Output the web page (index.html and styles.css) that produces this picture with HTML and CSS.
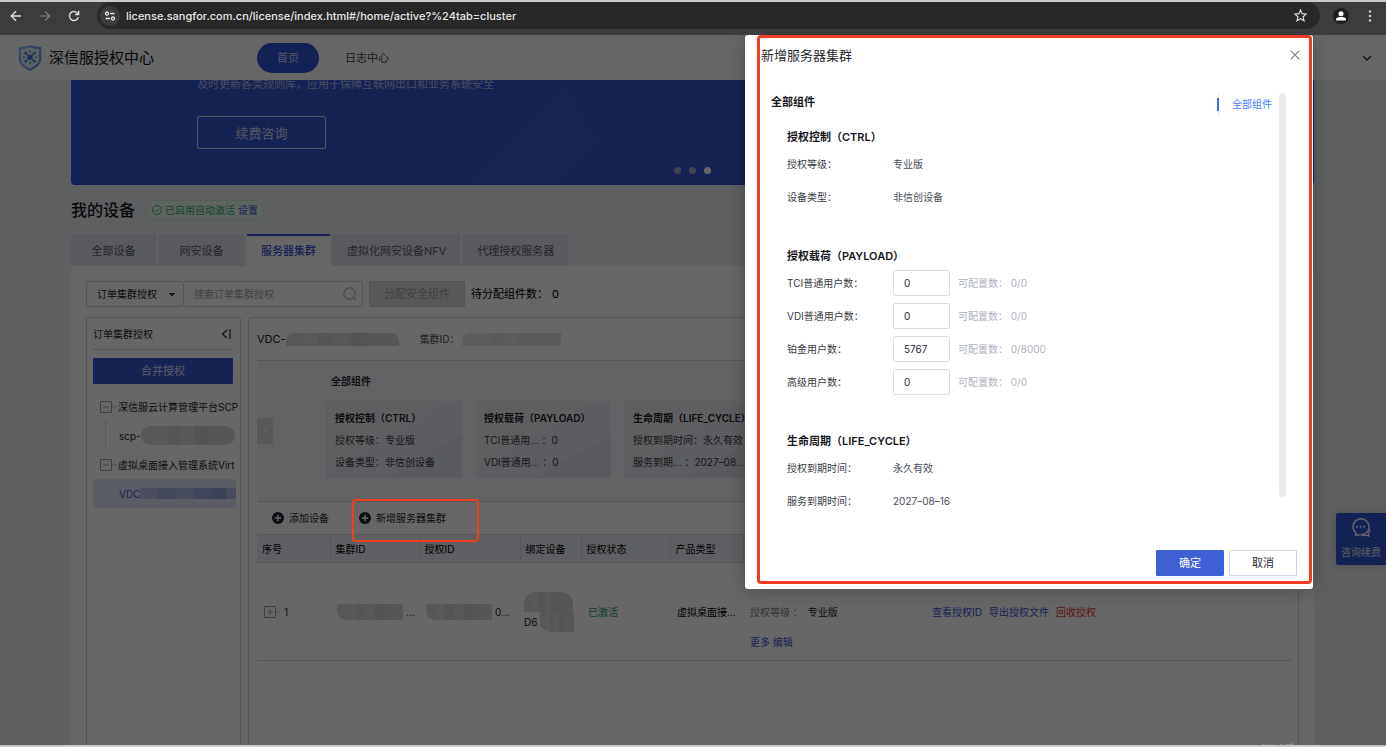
FILE: index.html
```html
<!DOCTYPE html>
<html lang="zh-CN">
<head>
<meta charset="utf-8">
<title>深信服授权中心</title>
<link rel="stylesheet" href="styles.css">
</head>
<body>
<div class="shell">
  <div class="browser">
    <button class="chrome-btn" aria-label="后退"><svg width="12" height="12" viewBox="0 0 12 12"><path d="M11 6H1.5M6 1.3 1.3 6 6 10.7" fill="none" stroke="#dcdcdc" stroke-width="1.4"/></svg></button>
    <button class="chrome-btn" aria-label="前进"><svg width="12" height="12" viewBox="0 0 12 12"><path d="M1 6h9.500M6 1.300 10.700 6 6 10.700" fill="none" stroke="#828282" stroke-width="1.200"/></svg></button>
    <button class="chrome-btn" aria-label="刷新"><svg width="12" height="12" viewBox="0 0 12 12"><path d="M10.300 7.200A4.500 4.500 0 1 1 9.400 3.100L10.500 4.300M10.700 .8v3.700H7" fill="none" stroke="#dcdcdc" stroke-width="1.400"/></svg></button>
    <div class="address">
      <span class="site-info"><svg width="12" height="10" viewBox="0 0 12 10"><g fill="none" stroke="#e4e4e4" stroke-width="1.300"><circle cx="3" cy="2.500" r="1.500"/><path d="M6 2.500h4.500M1.500 7.500H6"/><circle cx="9" cy="7.500" r="1.500"/></g></svg></span>
      <span class="url">license.sangfor.com.cn/license/index.html#/home/active?%24tab=cluster</span>
      <svg width="13" height="13" viewBox="0 0 13 13"><path d="m6.500 1 1.600 3.700 4 .4-3 2.700.9 4-3.500-2.100-3.500 2.100.9-4-3-2.700 4-.4z" fill="none" stroke="#d8d8d8" stroke-width="1.200"/></svg>
    </div>
    <button class="avatar" aria-label="个人资料"><svg width="16" height="16" viewBox="0 0 16 16"><circle cx="8" cy="8" r="8" fill="#1f1f1f"/><circle cx="8" cy="5.700" r="2.500" fill="#fff"/><path d="M3 12.500V11.500C3 9.600 6 9 8 9s5 .6 5 2.500v1z" fill="#fff"/></svg></button>
    <button class="chrome-btn" aria-label="菜单"><svg width="4" height="12" viewBox="0 0 4 12"><g fill="#d0d0d0"><circle cx="2" cy="1.500" r="1.200"/><circle cx="2" cy="6" r="1.200"/><circle cx="2" cy="10.500" r="1.200"/></g></svg></button>
  </div>

  <div class="page">
    <header class="header">
      <svg width="24" height="26" viewBox="0 0 24 26"><defs><linearGradient id="shield" x1="0" y1="0" x2="1" y2="1"><stop offset="0" stop-color="#8fc0ff"/><stop offset="1" stop-color="#5586d8"/></linearGradient></defs><path d="M12 1.200C9 2.400 5 3 1.800 3v11c0 5 5 8.500 10.200 10.800C17.200 22.500 22.200 19 22.200 14V3C19 3 15 2.400 12 1.200z" fill="#e4effc" stroke="url(#shield)" stroke-width="2"/><g stroke="#467fd2" stroke-width="1.200" fill="#467fd2"><path d="m7.500 8 9 8.500M16.500 8l-9 8.500"/><circle cx="12" cy="12.300" r="2"/><circle cx="7.500" cy="8" r=".7"/><circle cx="16.500" cy="8" r=".7"/><circle cx="7.500" cy="16.500" r=".7"/><circle cx="16.500" cy="16.500" r=".7"/></g><g fill="#467fd2"><circle cx="12" cy="6.500" r=".9"/><circle cx="12" cy="18" r=".9"/><circle cx="6" cy="12.300" r=".9"/><circle cx="18" cy="12.300" r=".9"/></g></svg>
      <span class="brand">深信服授权中心</span>
      <nav class="nav"><a class="nav-link active" href="#home">首页</a><a class="nav-link" href="#log">日志中心</a></nav>
      <button class="account" aria-label="账户"><svg width="10" height="6" viewBox="0 0 10 6"><path d="m1 1 4 4 4-4" fill="none" stroke="#333" stroke-width="1.300"/></svg></button>
    </header>

    <main class="content">
      <section class="banner">
        <svg class="banner-art" width="300" height="105" viewBox="0 0 300 105"><path d="M0 105 105 0h90L90 105z" fill="#fff" opacity=".02"/><path d="M60 105 152 12l36 46-47 47z" fill="#fff" opacity=".04"/></svg>
        <p class="banner-text">及时更新各类规则库，应用于保障互联网出口和业务系统安全</p>
        <button class="banner-btn">续费咨询</button>
        <div class="dots"><i></i><i></i><i class="on"></i></div>
      </section>

      <div class="title-row">
        <h1>我的设备</h1>
        <span class="badge"><svg width="10" height="10" viewBox="0 0 10 10"><circle cx="5" cy="5" r="4.400" fill="none" stroke="#3fae73"/><path d="m2.800 5 1.600 1.600 2.900-3" fill="none" stroke="#3fae73"/></svg>已启用自动激活<a href="#set">设置</a></span>
      </div>

      <div class="tabs">
        <button class="tab">全部设备</button><button class="tab">网安设备</button><button class="tab active">服务器集群</button><button class="tab">虚拟化网安设备NFV</button><button class="tab">代理授权服务器</button>
      </div>

      <section class="panel">
        <div class="toolbar">
          <div class="search-group">
            <select class="filter" aria-label="查询类型"><option>订单集群授权</option></select>
            <input class="search" type="text" placeholder="搜索订单集群授权" aria-label="搜索订单集群授权">
            <svg class="search-icon" width="14" height="14" viewBox="0 0 14 14"><circle cx="6.500" cy="6.500" r="5.700" fill="none" stroke="#a0a0a4"/><path d="m10.700 10.700 2.500 2.500" stroke="#a0a0a4"/></svg>
          </div>
          <button class="assign" disabled>分配安全组件</button>
          <span class="pending">待分配组件数：<b>0</b></span>
        </div>

        <div class="columns">
          <aside class="side">
            <div class="side-head">订单集群授权<svg width="10" height="10" viewBox="0 0 10 10"><path d="M6 1 1.500 5 6 9M9 0v10" fill="none" stroke="#333" stroke-width="1.200"/></svg></div>
            <button class="merge">合并授权</button>
            <ul class="tree">
              <li class="node"><svg width="18" height="12" viewBox="0 0 18 12"><path d="M.5.5h11v11H.5zM3 6h6" fill="none" stroke="#a4a4a8"/><path d="M12 6h5" stroke="#c4c4c8"/></svg><span>深信服云计算管理平台SCP</span></li>
              <li class="node leaf"><span>scp-</span><i class="mosaic pill"></i></li>
              <li class="node"><svg width="18" height="12" viewBox="0 0 18 12"><path d="M.5.5h11v11H.5zM3 6h6" fill="none" stroke="#a4a4a8"/><path d="M12 6h5" stroke="#c4c4c8"/></svg><span>虚拟桌面接入管理系统Virt</span></li>
              <li class="node plain selected"><span>VDC</span><i class="mosaic blue"></i></li>
            </ul>
          </aside>

          <section class="detail">
            <div class="cluster">
              <span class="cluster-name">VDC-</span><i class="mosaic name"></i>
              <span class="cluster-id">集群ID：</span><i class="mosaic id"></i>
            </div>
            <div class="components">
              <button class="prev" aria-label="上一页"><svg width="5" height="8" viewBox="0 0 5 8"><path d="M4.500.5 1 4l3.500 3.500" fill="none" stroke="#fff"/></svg></button>
              <div class="component-group">
                <h3>全部组件</h3>
                <div class="cards">
                  <div class="card"><h4>授权控制（CTRL）</h4><p>授权等级：专业版</p><p>设备类型：非信创设备</p></div>
                  <div class="card"><h4>授权载荷（PAYLOAD）</h4><p>TCI普通用… ：0</p><p>VDI普通用… ：0</p></div>
                  <div class="card"><h4>生命周期（LIFE_CYCLE）</h4><p>授权到期时间：永久有效</p><p>服务到期… ：2027–08…</p></div>
                </div>
              </div>
            </div>
            <div class="actions">
              <button class="action"><svg width="12" height="12" viewBox="0 0 12 12"><circle cx="6" cy="6" r="6" fill="#20263a"/><path d="M6 2.800v6.400M2.800 6h6.400" stroke="#fff" stroke-width="1.500"/></svg>添加设备</button>
              <button class="action"><svg width="12" height="12" viewBox="0 0 12 12"><circle cx="6" cy="6" r="6" fill="#20263a"/><path d="M6 2.800v6.400M2.800 6h6.400" stroke="#fff" stroke-width="1.500"/></svg>新增服务器集群</button>
            </div>
            <table class="grid">
              <colgroup><col class="c-no"><col class="c-id"><col class="c-lic"><col class="c-dev"><col class="c-state"><col class="c-type"><col class="c-info"><col></colgroup>
              <thead><tr><th>序号</th><th>集群ID</th><th>授权ID</th><th>绑定设备</th><th>授权状态</th><th>产品类型</th><th>授权信息</th><th>操作</th></tr></thead>
              <tbody><tr>
                <td><span class="row-no"><svg width="17" height="12" viewBox="0 0 17 12"><path d="M.5.5h11v11H.5zM3 6h6M6 3v6" fill="none" stroke="#a4a4a8"/><path d="M12 6h4" stroke="#c4c4c8"/></svg>1</span></td>
                <td><span class="masked"><i class="mosaic cell"></i>…</span></td>
                <td><span class="masked"><i class="mosaic cell"></i>0…</span></td>
                <td><span class="device"><i class="mosaic device-top"></i><span class="masked">D6<i class="mosaic device-low"></i></span></span></td>
                <td class="ok">已激活</td>
                <td class="product">虚拟桌面接…</td>
                <td class="info"><p><span class="muted">授权等级 ：</span>专业版</p><p><a href="#more">更多</a> <a href="#edit">编辑</a></p></td>
                <td><span class="ops"><a href="#view">查看授权ID</a><a href="#export">导出授权文件</a><a class="danger" href="#recycle">回收授权</a></span></td>
              </tr></tbody>
            </table>
          </section>
        </div>
      </section>
    </main>

    <button class="consult"><svg width="20" height="19" viewBox="0 0 20 19"><path d="M4.500 17.500 5 15A8 8 0 1 1 10 16.800H7z" fill="none" stroke="#fff" stroke-width="1.300" stroke-linejoin="round"/><path d="M18.300 10.500c.8 2.500.2 4-.8 5l.5 2.500-2.500-.8c-2 .8-3.500.4-4.500-.4" fill="none" stroke="#fff" stroke-width="1.200"/><g fill="#fff"><circle cx="6" cy="8.700" r="1"/><circle cx="9.500" cy="8.700" r="1"/><circle cx="13" cy="8.700" r="1"/></g></svg>咨询续费</button>

    <div class="overlay"></div>
    <div class="mark action-mark"></div>

    <form class="modal" role="dialog" aria-labelledby="dlg-title">
      <div class="modal-head"><h2 id="dlg-title">新增服务器集群</h2><button type="button" class="close" aria-label="关闭"><svg width="10" height="10" viewBox="0 0 10 10"><path d="m.7.700 8.600 8.600m0-8.600L.7 9.300" stroke="#808084" stroke-width="1.200"/></svg></button></div>
      <div class="modal-body">
        <div class="fields">
          <h3>全部组件</h3>
          <section class="group">
            <h4>授权控制（CTRL）</h4>
            <div class="field"><span>授权等级：</span><em>专业版</em></div>
            <div class="field"><span>设备类型：</span><em>非信创设备</em></div>
          </section>
          <section class="group">
            <h4>授权载荷（PAYLOAD）</h4>
            <div class="field"><label for="tci">TCI普通用户数：</label><input id="tci" type="text" value="0"><small>可配置数： 0/0</small></div>
            <div class="field"><label for="vdi">VDI普通用户数：</label><input id="vdi" type="text" value="0"><small>可配置数： 0/0</small></div>
            <div class="field"><label for="plat">铂金用户数：</label><input id="plat" type="text" value="5767"><small>可配置数： 0/8000</small></div>
            <div class="field"><label for="adv">高级用户数：</label><input id="adv" type="text" value="0"><small>可配置数： 0/0</small></div>
          </section>
          <section class="group">
            <h4>生命周期（LIFE_CYCLE）</h4>
            <div class="field"><span>授权到期时间：</span><em>永久有效</em></div>
            <div class="field"><span>服务到期时间：</span><em>2027–08–16</em></div>
          </section>
        </div>
        <div class="anchors"><a class="anchor" href="#all">全部组件</a></div>
        <div class="scrollbar"></div>
      </div>
      <div class="modal-foot"><button type="submit" class="btn primary">确定</button><button type="button" class="btn">取消</button></div>
      <div class="mark modal-mark"></div>
    </form>
  </div>
  <div class="watermark">激活 Windows</div>
</div>
</body>
</html>
```

FILE: styles.css
```css
* { box-sizing: border-box; }
body, h1, h2, h3, h4, p, ul { margin: 0; padding: 0; }
body { font: 10px/20px Inter, "Noto Sans CJK SC", sans-serif; color: #2a2b30; }
button, input, select { font: inherit; color: inherit; margin: 0; padding: 0; border: 0; background: none; }
button { display: inline-flex; align-items: center; justify-content: center; flex: none; white-space: nowrap; }
a { color: #3a57d4; text-decoration: none; }
svg { flex: none; }
em, i { font-style: normal; }

.shell { position: relative; display: flex; flex-direction: column; height: 100vh; overflow: hidden; border-top: 2px solid #c6cacc; border-bottom: 2px solid #cbcbcb; }

/* Browser bar */
.browser { display: flex; align-items: flex-start; flex: none; height: 33px; padding: 0 13px 0 10px; background: #3c3c3c; }
.chrome-btn { width: 12px; height: 27px; margin-right: 17px; }
.chrome-btn:last-child { margin: 0; width: 6px; }
.address { display: flex; flex: 1; align-items: center; height: 27px; margin-right: 13px; padding: 0 13px 0 3px; border-radius: 14px; background: #282828; color: #e6e6e6; }
.site-info { display: flex; align-items: center; justify-content: center; width: 20px; height: 20px; margin-right: 6px; border-radius: 50%; background: #3c3c3c; }
.url { flex: 1; font-size: 11px; font-weight: 500; }
.avatar { width: 16px; height: 27px; margin-right: 18px; }

/* Page */
.page { position: relative; flex: 1; overflow: hidden; background: #ebedf1; }
.header { position: relative; z-index: 1; display: flex; align-items: center; height: 45px; padding: 0 14px 0 18px; background: #fff; }
.brand { width: 208px; margin-left: 7px; font-size: 15px; color: #111; }
.nav { display: flex; flex: 1; gap: 8px; font-size: 11px; }
.nav-link { padding: 0 18px; border-radius: 15px; line-height: 30px; color: #444; }
.nav-link.active { padding: 0 20px; background: #3453d4; color: #cdd4f0; }
.account { width: 10px; height: 20px; }
.content { margin: 0 72px 0 71px; }

.banner { position: relative; display: flex; flex-direction: column; align-items: flex-start; justify-content: flex-end; height: 105px; padding: 0 126px 36px; border-radius: 0 0 4px 4px; background: #3755cf; color: #fff; }
.banner-art { position: absolute; left: 340px; top: 0; }
.banner-text { margin-bottom: 22px; font-size: 11px; opacity: .6; }
.banner-btn { width: 129px; height: 33px; border: 1px solid #d5d8e4; border-radius: 2px; font-size: 13px; color: #d5d8e4; }
.dots { position: absolute; left: 0; right: 0; bottom: 11px; display: flex; justify-content: center; gap: 8px; }
.dots i { width: 7px; height: 7px; border-radius: 50%; background: #a0a6c0; }
.dots .on { background: #fff; }

.title-row { display: flex; align-items: center; gap: 11px; height: 49px; }
h1 { font-size: 16px; font-weight: 500; color: #16171c; }
.badge { display: flex; align-items: center; gap: 3px; height: 20px; padding: 0 5px; border: 1px solid #cfe8d4; border-radius: 10px; background: #e9f7ea; color: #3fae73; }

.tabs { display: flex; gap: 3px; font-size: 11px; }
.tab { min-width: 85px; height: 32px; padding: 0 14px; border-top: 2px solid #dde0e8; background: #dde0e8; color: #62646c; }
.tab.active { min-width: 0; border-color: #3a57d4; background: #fff; color: #3a57d4; font-weight: 500; }

.panel { padding: 15px 15px 0; background: #fff; }
.toolbar { display: flex; align-items: center; gap: 6px; height: 26px; }
.search-group { position: relative; display: flex; width: 277px; height: 26px; }
.filter { width: 98px; padding: 0 10px; border: 1px solid #cfd0d6; border-radius: 2px; appearance: none; color: #222;
  background: linear-gradient(to bottom right, #444 50%, transparent 50%) 85px 11px / 3px 4px no-repeat, linear-gradient(to bottom left, #444 50%, transparent 50%) 82px 11px / 3px 4px no-repeat; }
.search { flex: 1; min-width: 0; padding: 0 10px; border: 1px solid #cfd0d6; border-left: 0; border-radius: 2px; }
.search::placeholder { color: #a3a4a8; opacity: 1; }
.search-icon { position: absolute; right: 6px; top: 6px; }
.assign { width: 96px; height: 26px; border: 1px solid #d0d0d2; border-radius: 2px; background: #dcdcde; color: #a4a4a8; font-size: 11px; }
.pending { font-size: 11px; color: #000; }
.pending b { font-weight: 400; margin-left: 4px; }

.columns { display: flex; gap: 7px; margin-top: 10px; height: 480px; }
.side { flex: none; width: 155px; padding: 0 7px 0 6px; border: 1px solid #d4d5da; border-radius: 2px; }
.side-head { display: flex; align-items: center; justify-content: space-between; height: 32px; padding-right: 2px; border-bottom: 1px solid #d4d5da; }
.merge { width: 100%; height: 26px; margin: 8px 0; border-radius: 1px; background: #3a57d4; color: #dfe3f4; font-size: 11px; }
.tree { list-style: none; margin-right: -6px; }
.node { position: relative; display: flex; align-items: center; height: 29px; padding-left: 7px; overflow: hidden; white-space: nowrap; }
.node.leaf::before { content: ""; position: absolute; left: 12px; top: 0; bottom: 0; border-left: 1px dotted #b4b4b8; }
.node.leaf, .node.plain { padding-left: 26px; }
.node.selected { margin-right: 3px; background: #e3e8fa; color: #3a57d4; }

.mosaic { flex: none; display: inline-block; height: 11px; background: linear-gradient(90deg, #dadada 0 14%, #dedede 14% 28%, #d4d4d4 28% 42%, #dbdbdb 42% 56%, #d2d2d2 56% 72%, #d6d6d6 72%); }
.mosaic.pill { width: 94px; height: 19px; border-radius: 10px; }
.mosaic.blue { width: 96px; background: linear-gradient(90deg, #b9c4ea 0 18%, #aab8e6 18% 38%, #b4c0e8 38% 56%, #a4b2e2 56% 74%, #94a5de 74% 90%, #b0bce8 90%); }
.mosaic.name { width: 113px; height: 13px; margin-right: 21px; border-radius: 8px 8px 0 0; }
.mosaic.id { width: 99px; height: 13px; opacity: .7; border-radius: 8px 0 0 0; }
.mosaic.cell { width: 66px; height: 16px; border-radius: 2px 2px 0 9px; }
.mosaic.device-top { width: 49px; height: 20px; border-radius: 12px 12px 0 0; }
.mosaic.device-low { width: 34px; height: 20px; border-radius: 0 0 0 10px; }

.detail { flex: 1; min-width: 0; padding: 0 7px 0 8px; border: 1px solid #d4d5da; border-radius: 2px; }
.cluster { display: flex; align-items: center; height: 43px; border-bottom: 1px solid #d4d5da; }
.cluster-name { font-size: 11px; }
.cluster-id { width: 42px; color: #555; }
.components { display: flex; align-items: center; height: 141px; overflow: hidden; border-bottom: 1px solid #d4d5da; background: #f4f5f9; }
.prev { width: 16px; height: 26px; margin-right: 53px; background: #dadbe0; }
.component-group { padding-bottom: 14px; }
.component-group h3 { padding-left: 5px; font-size: 10px; font-weight: 600; margin-bottom: 10px; }
.cards { display: flex; gap: 13px; }
.card { width: 136px; height: 77px; padding: 6px 9px; border-radius: 2px; line-height: 22px; white-space: nowrap; color: #3c3d44; background: linear-gradient(150deg, #edeef3 0 45%, #e7e8f0 45% 72%, #dfe1ec 72%); }
.card h4 { font-size: 10px; font-weight: 600; color: #222; }
.actions { display: flex; gap: 30px; height: 32px; padding-left: 15px; }
.action { gap: 5px; }
.grid { width: 100%; border-collapse: collapse; table-layout: fixed; text-align: left; }
.c-no { width: 73px; } .c-id { width: 89px; } .c-lic { width: 101px; } .c-dev { width: 61px; } .c-state { width: 89px; } .c-type { width: 73px; } .c-info { width: 182px; }
.grid th { height: 28px; padding: 0 5px; font-weight: 400; color: #000; background: #eceef4; border: 1px solid #d8dae2; border-width: 1px 0; }
.grid th + th { border-left-width: 1px; }
.grid td { height: 98px; padding: 0 7px; border-bottom: 1px solid #d0d1d6; white-space: nowrap; }
.row-no, .masked { display: flex; align-items: center; gap: 3px; }
.device { display: flex; flex-direction: column; margin: 0 -3px; }
.grid .ok { color: #2e9a62; }
.grid .product { color: #000; overflow: hidden; }
.grid .info { vertical-align: bottom; line-height: 30px; padding-bottom: 3px; }
.muted { color: #85868c; margin-right: 5px; }
.ops { display: flex; gap: 7px; }
.ops .danger { color: #e03a36; }

.consult { position: absolute; right: 0; top: 478px; width: 50px; height: 52px; flex-direction: column; gap: 7px; border-radius: 2px 0 0 2px; background: #3453cf; color: #dfe3f4; line-height: 16px; box-shadow: 0 0 8px #b8bcc8; }

.overlay { position: absolute; inset: 0; z-index: 2; background: rgba(0, 0, 0, .6); }
.mark { position: absolute; border: 2px solid #f03c20; border-radius: 4px; pointer-events: none; }
.action-mark { z-index: 3; left: 352px; top: 464px; width: 127px; height: 43px; }

/* Dialog */
.modal { position: absolute; z-index: 4; top: 0; right: 73px; width: 568px; padding: 0 16px 13px; border-radius: 3px; background: #fff; box-shadow: 0 2px 18px rgba(0, 0, 0, .25); }
.modal-mark { left: 12px; right: 1px; top: 0; bottom: 5px; border-width: 3px; }
.modal-head { display: flex; align-items: center; justify-content: space-between; height: 40px; margin-right: -3px; }
.modal-head h2 { font-size: 13px; font-weight: 400; }
.close { width: 10px; height: 20px; }
.modal-body { display: flex; align-items: flex-start; padding: 17px 11px 0 10px; }
.fields { flex: 1; }
.fields h3 { font-size: 11px; font-weight: 600; color: #16171c; }
.group { padding: 15px 0 18px 16px; }
.group:last-child { padding-bottom: 0; }
.group h4 { font-size: 11px; font-weight: 600; color: #16171c; }
.field { display: flex; align-items: center; height: 33px; }
.field > :first-child { width: 106px; color: #3a3b42; }
.field em { color: #4a4d58; }
.field input { width: 57px; height: 26px; padding: 0 10px; border: 1px solid #dcdde2; border-radius: 2px; }
.field small { margin-left: 8px; font-size: 10px; color: #b0b3be; }
.anchors { margin: 2px 7px 0 0; padding: 4px 0; background: linear-gradient(#e0e2e6, #e0e2e6) 1px 0 / 1px 100% no-repeat; }
.anchor { display: block; padding-left: 13px; border-left: 2px solid #3a6cff; line-height: 13px; color: #4a7cff; }
.scrollbar { align-self: stretch; width: 7px; margin: 1px 0 20px; border-radius: 4px; background: #ebecee; }
.modal-foot { display: flex; justify-content: flex-end; gap: 5px; margin-top: 33px; }
.btn { width: 68px; height: 26px; border: 1px solid #d0d5e4; border-radius: 1px; font-size: 11px; }
.btn.primary { border-color: #3f5fd4; background: #3f5fd4; color: #fff; }

.watermark { position: absolute; z-index: 5; right: 12px; bottom: -17px; font-size: 17px; line-height: 20px; color: #909090; }
```
